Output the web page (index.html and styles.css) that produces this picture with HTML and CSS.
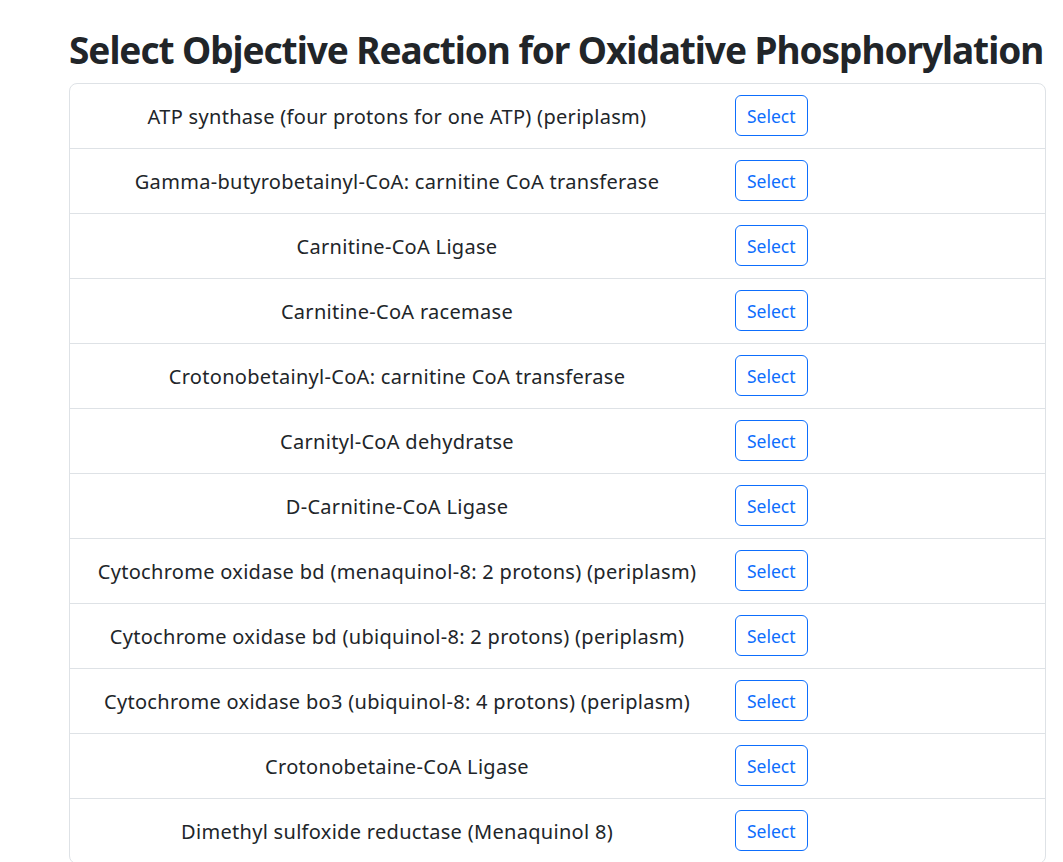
FILE: index.html
```html
<!DOCTYPE html>
<html lang="en">
<head>
<meta charset="utf-8">
<title>Select Objective Reaction</title>
<link rel="stylesheet" href="styles.css">
</head>
<body>
<main class="page">
  <h1 class="title">Select Objective Reaction for Oxidative Phosphorylation</h1>
  <ul class="list">
    <li class="item"><span class="name">ATP synthase (four protons for one ATP) (periplasm)</span><button class="btn">Select</button></li>
    <li class="item"><span class="name">Gamma-butyrobetainyl-CoA: carnitine CoA transferase</span><button class="btn">Select</button></li>
    <li class="item"><span class="name">Carnitine-CoA Ligase</span><button class="btn">Select</button></li>
    <li class="item"><span class="name">Carnitine-CoA racemase</span><button class="btn">Select</button></li>
    <li class="item"><span class="name">Crotonobetainyl-CoA: carnitine CoA transferase</span><button class="btn">Select</button></li>
    <li class="item"><span class="name">Carnityl-CoA dehydratse</span><button class="btn">Select</button></li>
    <li class="item"><span class="name">D-Carnitine-CoA Ligase</span><button class="btn">Select</button></li>
    <li class="item"><span class="name">Cytochrome oxidase bd (menaquinol-8: 2 protons) (periplasm)</span><button class="btn">Select</button></li>
    <li class="item"><span class="name">Cytochrome oxidase bd (ubiquinol-8: 2 protons) (periplasm)</span><button class="btn">Select</button></li>
    <li class="item"><span class="name">Cytochrome oxidase bo3 (ubiquinol-8: 4 protons) (periplasm)</span><button class="btn">Select</button></li>
    <li class="item"><span class="name">Crotonobetaine-CoA Ligase</span><button class="btn">Select</button></li>
    <li class="item"><span class="name">Dimethyl sulfoxide reductase (Menaquinol 8)</span><button class="btn">Select</button></li>
  </ul>
</main>
</body>
</html>
```
FILE: styles.css
```css
html, body {
  margin: 0;
  padding: 0;
  background: #ffffff;
}
body {
  font-family: "Noto Sans", "Open Sans", sans-serif;
  color: #212529;
}
.page {
  padding: 26px 17px 0 69px;
}
.title {
  margin: 0 0 9px 0;
  font-size: 37px;
  font-weight: 700;
  letter-spacing: -1.05px;
  line-height: 1.3;
  white-space: nowrap;
  color: #212529;
}
.list {
  list-style: none;
  margin: 0;
  padding: 0;
  border: 1px solid #dee2e6;
  border-radius: 8px;
  width: 977px;
  box-sizing: border-box;
}
.item {
  display: grid;
  grid-template-columns: 654px auto;
  column-gap: 11px;
  align-items: center;
  justify-items: start;
  padding: 11px 0 12px 0;
  border-bottom: 1px solid #dee2e6;
}
.item:last-child {
  border-bottom: none;
}
.name {
  justify-self: center;
  font-size: 20px;
  letter-spacing: 0.3px;
  line-height: 1.5;
  text-align: center;
  position: relative;
  top: 1px;
}
.btn {
  font-family: inherit;
  font-size: 17.5px;
  line-height: 1.5;
  color: #0d6efd;
  background: #ffffff;
  border: 1px solid #0d6efd;
  border-radius: 6px;
  padding: 7px 11px;
  height: 41px;
  box-sizing: border-box;
  cursor: pointer;
}
```
